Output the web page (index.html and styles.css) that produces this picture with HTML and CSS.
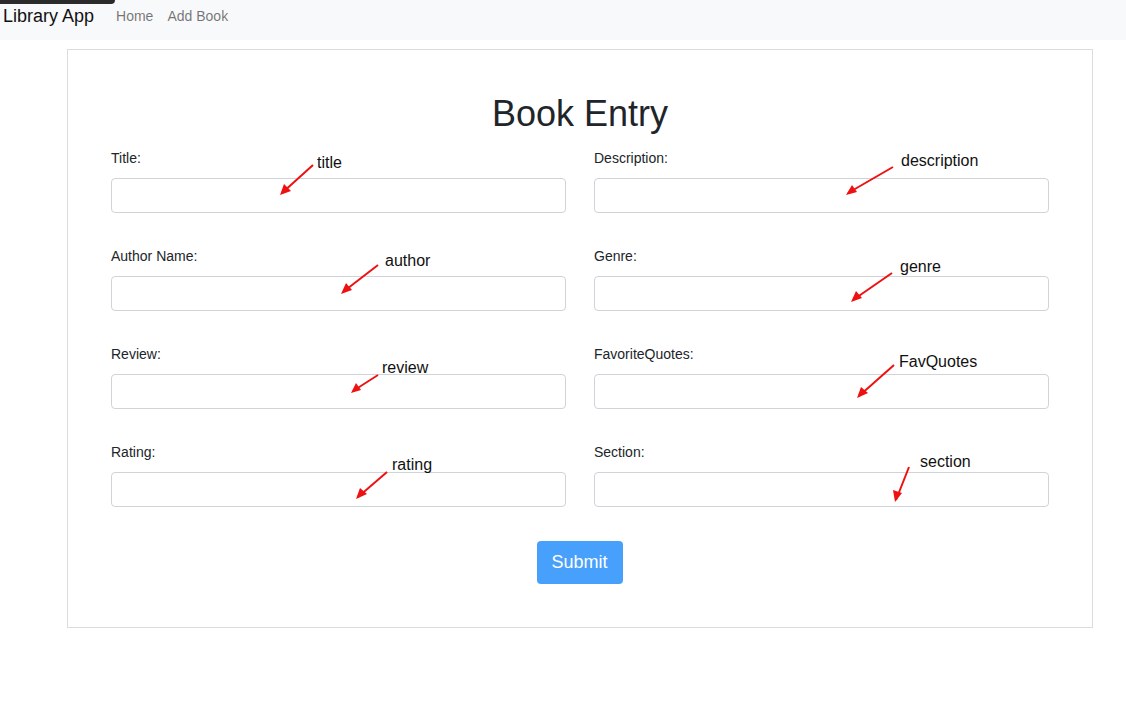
FILE: index.html
```html
<!DOCTYPE html>
<html lang="en">
<head>
<meta charset="utf-8">
<title>Library App</title>
<link rel="stylesheet" href="styles.css">
</head>
<body>
<div class="tab"></div>
<nav class="navbar">
  <span class="brand">Library App</span>
  <a class="nav-link" href="#">Home</a>
  <a class="nav-link" href="#">Add Book</a>
</nav>
<main class="card">
  <h1 class="heading">Book Entry</h1>
  <form class="form-grid">
    <div class="field"><label>Title:</label><input type="text"></div>
    <div class="field"><label>Description:</label><input type="text"></div>
    <div class="field"><label>Author Name:</label><input type="text"></div>
    <div class="field"><label>Genre:</label><input type="text"></div>
    <div class="field"><label>Review:</label><input type="text"></div>
    <div class="field"><label>FavoriteQuotes:</label><input type="text"></div>
    <div class="field"><label>Rating:</label><input type="text"></div>
    <div class="field"><label>Section:</label><input type="text"></div>
    <div class="actions"><button type="button" class="btn">Submit</button></div>
  </form>
</main>
<svg class="annotations" width="1126" height="703" viewBox="0 0 1126 703">
  <g class="arrows">
    <line x1="313" y1="165" x2="282" y2="193"/>
    <line x1="378" y1="265" x2="343" y2="292"/>
    <line x1="893" y1="167" x2="848" y2="193"/>
    <line x1="892" y1="273" x2="853" y2="300"/>
    <line x1="378" y1="375" x2="353" y2="391"/>
    <line x1="387" y1="472" x2="358" y2="497"/>
    <line x1="894" y1="365" x2="859" y2="396"/>
    <line x1="909" y1="467" x2="896" y2="500"/>
  </g>
  <g class="heads">
    <polygon points="280,195 284,184 291,191"/>
    <polygon points="341,294 346,283 352,290"/>
    <polygon points="846,195 852,185 857,192"/>
    <polygon points="851,302 856,291 862,298"/>
    <polygon points="351,393 356,383 361,390"/>
    <polygon points="356,499 360,488 367,494"/>
    <polygon points="857,398 861,387 868,393"/>
    <polygon points="895,502 893,490 902,493"/>
  </g>
  <g class="notes">
    <text x="317" y="168">title</text>
    <text x="385" y="266">author</text>
    <text x="901" y="166">description</text>
    <text x="900" y="272">genre</text>
    <text x="382" y="373">review</text>
    <text x="392" y="470">rating</text>
    <text x="899" y="367">FavQuotes</text>
    <text x="920" y="467">section</text>
  </g>
</svg>
</body>
</html>
```
FILE: styles.css
```css
* { box-sizing: border-box; }
html, body { margin: 0; padding: 0; }
body {
  font-family: "Liberation Sans", Arial, sans-serif;
  color: #212529;
  background: #fff;
  position: relative;
  width: 1126px;
  height: 703px;
  overflow: hidden;
}
.tab {
  position: absolute;
  left: 0;
  top: 0;
  width: 115px;
  height: 4px;
  background: #2b2b2b;
  border-bottom-right-radius: 4px;
}
.navbar {
  height: 40px;
  background: #f8f9fa;
  display: flex;
  align-items: center;
  padding: 0 0 8px 3px;
}
.brand {
  font-size: 18px;
  color: #111;
  margin-right: 22px;
}
.nav-link {
  font-size: 14px;
  color: rgba(0,0,0,.55);
  text-decoration: none;
  margin-right: 14px;
}
.card {
  margin: 9px 0 0 67px;
  width: 1026px;
  border: 1px solid #dcdcdc;
  padding: 42px 43px 43px 43px;
}
.heading {
  font-size: 36px;
  font-weight: 400;
  line-height: 1.2;
  text-align: center;
  margin: 0 0 13px 0;
}
.form-grid {
  display: grid;
  grid-template-columns: 455px 455px;
  column-gap: 28px;
  row-gap: 33px;
}
.field label {
  display: block;
  font-size: 14px;
  line-height: 21px;
  margin-bottom: 9px;
  color: #212529;
}
.field input {
  display: block;
  width: 100%;
  height: 35px;
  border: 1px solid #cfd4d9;
  border-radius: 4px;
  background: #fff;
  font: inherit;
}
.actions {
  grid-column: 1 / 3;
  display: flex;
  justify-content: center;
  padding-top: 1px;
}
.btn {
  width: 86px;
  height: 43px;
  background: #47a0fc;
  color: #fff;
  border: none;
  border-radius: 4px;
  font-family: "Liberation Sans", Arial, sans-serif;
  font-size: 18px;
  margin-right: 1px;
}
.annotations {
  position: absolute;
  left: 0;
  top: 0;
  pointer-events: none;
}
.arrows line {
  stroke: #ee1111;
  stroke-width: 2;
}
.heads polygon {
  fill: #ee1111;
}
.notes text {
  font-family: "Liberation Sans", Arial, sans-serif;
  font-size: 16px;
  fill: #111;
}
```
